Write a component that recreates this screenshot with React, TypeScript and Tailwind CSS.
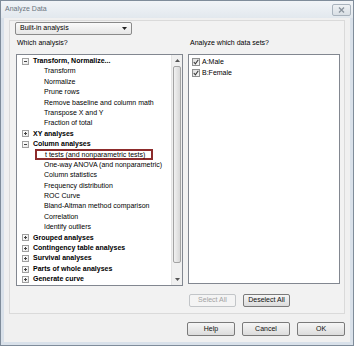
import React from 'react'

const font = "font-['Liberation_Sans',Arial,sans-serif]"

type Node = { label: string; open?: boolean; children?: string[] }

const TREE: Node[] = [
  {
    label: 'Transform, Normalize...',
    open: true,
    children: ['Transform', 'Normalize', 'Prune rows', 'Remove baseline and column math', 'Transpose X and Y', 'Fraction of total'],
  },
  { label: 'XY analyses' },
  {
    label: 'Column analyses',
    open: true,
    children: [
      't tests (and nonparametric tests)',
      'One-way ANOVA (and nonparametric)',
      'Column statistics',
      'Frequency distribution',
      'ROC Curve',
      'Bland-Altman method comparison',
      'Correlation',
      'Identify outliers',
    ],
  },
  { label: 'Grouped analyses' },
  { label: 'Contingency table analyses' },
  { label: 'Survival analyses' },
  { label: 'Parts of whole analyses' },
  { label: 'Generate curve' },
]

function Expander({ open }: { open?: boolean }) {
  return (
    <span className="w-[7px] h-[7px] border border-[#a0a0a0] bg-gradient-to-br from-white to-[#e8e8e8] flex items-center justify-center relative shrink-0">
      <span className="absolute w-[3px] h-[1px] bg-[#444]" />
      {!open && <span className="absolute w-[1px] h-[3px] bg-[#444]" />}
    </span>
  )
}

function Btn({ children, disabled, className }: { children: React.ReactNode; disabled?: boolean; className?: string }) {
  return (
    <div
      className={
        'flex items-center justify-center rounded-[2px] border ' +
        (disabled
          ? 'border-[#c2c5c8] bg-[#f4f4f4] text-[#a3a3a3] '
          : 'border-[#7a7a7a] bg-gradient-to-b from-[#f6f6f6] to-[#dcdcdc] text-[#111] ') +
        (className ?? '')
      }
    >
      {children}
    </div>
  )
}

function Check({ label }: { label: string }) {
  return (
    <div className="h-[11.5px] flex items-center gap-[2px]">
      <span className="w-[8px] h-[8px] border border-[#8e8f8f] bg-gradient-to-br from-[#dedede] to-[#f7f7f7] flex items-center justify-center">
        <svg width="6" height="6" viewBox="0 0 6 6">
          <path d="M0.8 3 L2.4 4.8 L5.3 0.8" stroke="#3a3a3a" strokeWidth="1.1" fill="none" />
        </svg>
      </span>
      <span>{label}</span>
    </div>
  )
}

export default function App() {
  return (
    <div className={`${font} w-[354px] h-[346px] text-[7px] text-black bg-[#d9e1ea] border border-[#7f8c9a] flex flex-col`}>
      {/* title bar */}
      <div className="h-[17px] flex items-center justify-between pl-[4px] pr-[2px] bg-gradient-to-b from-[#f1f4f7] to-[#e2e8ee]">
        <span className="text-[7px] text-[#6a747e]">Analyze Data</span>
        <div className="w-[19px] h-[12px] rounded-[2px] border border-[#a9b3bd] bg-gradient-to-b from-[#eef1f4] to-[#d9dfe5] flex items-center justify-center">
          <svg width="7" height="6" viewBox="0 0 7 6">
            <path d="M1 0.5 L6 5.5 M6 0.5 L1 5.5" stroke="#8a949e" strokeWidth="1.4" />
          </svg>
        </div>
      </div>

      {/* client area */}
      <div className="flex-1 mx-[3px] mb-[3px] bg-[#f0f0f0] px-[5px] pt-[2px] flex flex-col">
        <div className="h-[294px] border border-[#dadada] bg-[#f2f2f2] pl-[6px] pr-[4px] pt-[1px] flex flex-col">
          {/* dropdown */}
          <div className="-ml-[1px] w-[117px] h-[13px] rounded-[2px] border border-[#8a8a8a] bg-gradient-to-b from-[#fbfbfb] to-[#e6e6e6] flex items-center justify-between pl-[4px] pr-[4px]">
            <span>Built-in analysis</span>
            <svg width="5" height="3" viewBox="0 0 5 3">
              <path d="M0 0 H5 L2.5 3 Z" fill="#222" />
            </svg>
          </div>

          <div className="flex gap-[5px] mt-[3px]">
            {/* left column */}
            <div className="w-[167px] flex flex-col">
              <div className="h-[10px] leading-[10px] pl-[1px]">Which analysis?</div>
              <div className="mt-[6px] h-[232px] border border-[#828790] bg-white flex">
                <div className="flex-1 pl-[5px] pt-[1px] leading-[10.4px]">
                  {TREE.map((n) => (
                    <div key={n.label}>
                      <div className="h-[10.4px] flex items-center gap-[4px] font-bold">
                        <Expander open={n.open} />
                        <span>{n.label}</span>
                      </div>
                      {n.open &&
                        n.children?.map((c) => (
                          <div key={c} className="h-[10.4px] flex items-center pl-[22px]">
                            {c.startsWith('t tests') ? (
                              <span className="-ml-[9px] pl-[8px] w-[118px] h-[11px] border-2 border-[#8c2b2b] flex items-center">{c}</span>
                            ) : (
                              <span>{c}</span>
                            )}
                          </div>
                        ))}
                    </div>
                  ))}
                </div>
                {/* scrollbar */}
                <div className="w-[11px] bg-[#f0f0f0] border-l border-[#e4e4e4] flex flex-col">
                  <div className="h-[11px] flex items-center justify-center">
                    <svg width="5" height="3" viewBox="0 0 5 3">
                      <path d="M0 3 H5 L2.5 0 Z" fill="#555" />
                    </svg>
                  </div>
                  <div className="mx-[1px] h-[197px] rounded-[2px] border border-[#a3a3a3] bg-gradient-to-r from-[#f1f1f1] to-[#d8d8d8]" />
                  <div className="flex-1" />
                  <div className="h-[11px] flex items-center justify-center">
                    <svg width="5" height="3" viewBox="0 0 5 3">
                      <path d="M0 0 H5 L2.5 3 Z" fill="#555" />
                    </svg>
                  </div>
                </div>
              </div>
            </div>

            {/* right column */}
            <div className="w-[152px] flex flex-col">
              <div className="h-[10px] leading-[10px] pl-[2px]">Analyze which data sets?</div>
              <div className="mt-[6px] h-[230px] border border-[#828790] bg-white pl-[3px] pt-[1px]">
                <Check label="A:Male" />
                <Check label="B:Female" />
              </div>
              <div className="mt-[10px] flex gap-[7px] pl-[1px]">
                <Btn disabled className="w-[47px] h-[13px]">Select All</Btn>
                <Btn className="w-[47px] h-[13px]">Deselect All</Btn>
              </div>
            </div>
          </div>
        </div>

        <div className="mt-[8px] flex justify-end gap-[7px]">
          <Btn className="w-[48px] h-[14px]">Help</Btn>
          <Btn className="w-[48px] h-[14px]">Cancel</Btn>
          <Btn className="w-[48px] h-[14px]">OK</Btn>
        </div>
      </div>
    </div>
  )
}
